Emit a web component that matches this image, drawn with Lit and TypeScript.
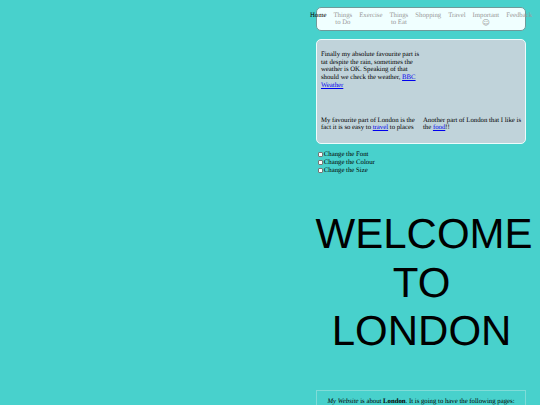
import { LitElement, html, css } from "lit";
import { customElement } from "lit/decorators.js";

@customElement("app-root")
export class AppRoot extends LitElement {
  static styles = css`
    :host {
      display: block;
      width: 540px;
      height: 405px;
      overflow: hidden;
      background: #48d1cc;
      font-family: "Liberation Serif", "Times New Roman", serif;
      font-size: 6.75px;
      line-height: 7.67px;
      text-rendering: geometricPrecision;
      color: #000;
    }
    .page {
      box-sizing: border-box;
      margin-left: 315.6px;
      width: 210.8px;
      padding-top: 7px;
      display: flex;
      flex-direction: column;
    }
    nav {
      box-sizing: border-box;
      height: 24px;
      background: #f0ffff;
      border: 1px solid #6f9a9a;
      border-radius: 5px;
      display: flex;
      gap: 7px;
      padding-top: 3.5px;
      justify-content: center;
    }
    nav a {
      color: #999;
      text-align: center;
      white-space: nowrap;
    }
    nav a.on { color: #000; }
    .smile { display: block; font-family: "DejaVu Sans", sans-serif; font-size: 7.5px; }
    .card {
      box-sizing: border-box;
      margin-top: 8px;
      height: 105px;
      background: #c0d3da;
      border: 1px solid #eefcfc;
      border-radius: 5px;
      padding: 11px 4px 0 4.4px;
      display: grid;
      grid-template-columns: 102px 102px;
      grid-template-rows: 65.5px 20px;
    }
    .card a { color: #00e; text-decoration: underline; }
    .checks { margin-top: 6.5px; display: flex; flex-direction: column; padding-left: 2px; }
    .checks label { display: flex; align-items: center; height: 8.2px; }
    .box { width: 5px; height: 5px; background: #fff; border: 0.5px solid #777; box-sizing: border-box; margin-right: 1.2px; border-radius: 1px; }
    h1 {
      margin: 35.1px 0 0 0;
      font: 400 42px/48.6px "Liberation Sans", Arial, sans-serif;
      text-align: center;
      width: 212px;
    }
    h1 span { display: block; white-space: nowrap; }
    .intro {
      box-sizing: border-box;
      margin-top: 34px;
      border: 1px solid #7fdcd8;
      padding: 7px 4px;
      text-align: center;
    }
  `;

  render() {
    return html`
      <div class="page">
        <nav>
          <a class="on">Home</a>
          <a>Things<br />to Do</a>
          <a>Exercise</a>
          <a>Things<br />to Eat</a>
          <a>Shopping</a>
          <a>Travel</a>
          <a>Important<span class="smile">☺</span></a>
          <a>Feedback</a>
        </nav>
        <section class="card">
          <div>Finally my absolute favourite part is tat despite the rain, sometimes the weather is OK. Speaking of that should we check the weather, <a>BBC Weather</a></div>
          <div></div>
          <div>My favourite part of London is the fact it is so easy to <a>travel</a> to places</div>
          <div>Another part of London that I like is the <a>food</a>!!</div>
        </section>
        <div class="checks">
          <label><span class="box"></span>Change the Font</label>
          <label><span class="box"></span>Change the Colour</label>
          <label><span class="box"></span>Change the Size</label>
        </div>
        <h1><span>WELCOME</span><span>TO</span><span>LONDON</span></h1>
        <div class="intro"><i>My Website</i> is about <b>London</b>. It is going to have the following pages:</div>
      </div>
    `;
  }
}
